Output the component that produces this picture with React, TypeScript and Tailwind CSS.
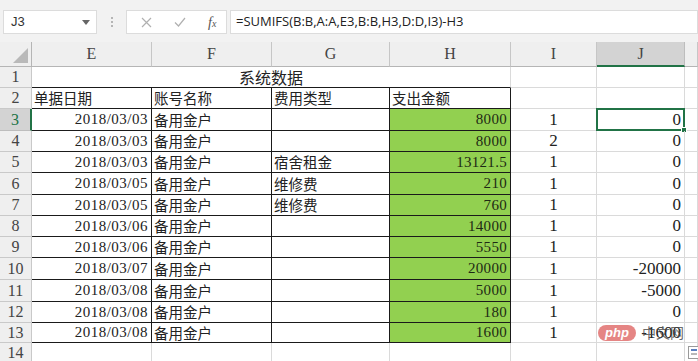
import { FC, ReactNode } from "react";

const serif = "font-['Liberation_Serif','Noto_Sans_CJK_SC',serif]";
const cjk = "font-['Noto_Sans_CJK_SC',sans-serif]";

const rows: string[][] = [
  ["2018/03/03", "备用金户", "", "8000", "1", "0"],
  ["2018/03/03", "备用金户", "", "8000", "2", "0"],
  ["2018/03/03", "备用金户", "宿舍租金", "13121.5", "1", "0"],
  ["2018/03/05", "备用金户", "维修费", "210", "1", "0"],
  ["2018/03/05", "备用金户", "维修费", "760", "1", "0"],
  ["2018/03/06", "备用金户", "", "14000", "1", "0"],
  ["2018/03/06", "备用金户", "", "5550", "1", "0"],
  ["2018/03/07", "备用金户", "", "20000", "1", "-20000"],
  ["2018/03/08", "备用金户", "", "5000", "1", "-5000"],
  ["2018/03/08", "备用金户", "", "180", "1", "0"],
  ["2018/03/08", "备用金户", "", "1600", "1", "-1600"],
];

// row heights measured off the sheet, rows 1..13
const heights = [
  "h-[21px]", "h-[21px]", "h-[22px]", "h-[21px]", "h-[21px]", "h-[22px]",
  "h-[21px]", "h-[21px]", "h-[21px]", "h-[22px]", "h-[22px]", "h-[21px]", "h-[20px]",
];

const grid = "border-r border-b border-[#dadada]";
const boxed = "border-r border-b border-[#1a1a1a]";

const RowHead: FC<{ n: number; active?: boolean }> = ({ n, active }) => (
  <div
    className={`w-[32px] shrink-0 flex items-center justify-center border-b border-r ${serif} text-[16px] ${
      active
        ? "bg-[#d3d3d3] border-b-[#bdbdbd] border-r-[#217346] border-r-2 text-[#217346]"
        : "bg-[#efefef] border-[#c9c9c9] text-[#444]"
    }`}
  >
    {n}
  </div>
);

const Cell: FC<{ w: string; cls?: string; children?: ReactNode }> = ({ w, cls = grid, children }) => (
  <div className={`${w} shrink-0 flex items-center overflow-visible whitespace-nowrap ${cls}`}>{children}</div>
);

const ColHead: FC<{ w: string; label: string; active?: boolean }> = ({ w, label, active }) => (
  <div
    className={`${w} shrink-0 flex items-center justify-center ${serif} text-[16px] text-[#444] border-r ${
      active
        ? "bg-[#d3d3d3] border-r-[#bdbdbd] border-b-2 border-b-[#217346]"
        : "bg-[#efefef] border-r-[#c6c6c6] border-b border-b-[#b5b5b5]"
    }`}
  >
    {label}
  </div>
);

export default function App() {
  return (
    <div className="w-[698px] h-[361px] overflow-hidden bg-white relative">
      {/* formula bar */}
      <div className="h-[42px] bg-[#f2f2f2] flex items-start pt-[10px] pl-[3px]">
        <div className="w-[94px] h-[24px] bg-white border border-[#dcdcdc] flex items-center justify-between pl-[7px] pr-[6px]">
          <span className="font-['Liberation_Sans',sans-serif] text-[13px] text-[#333]">J3</span>
          <svg width="8" height="5" viewBox="0 0 8 5">
            <path d="M0 0h8L4 5z" fill="#666" />
          </svg>
        </div>
        <div className="w-[29px] h-[24px] flex flex-col items-center justify-center gap-[2px]">
          <span className="w-[2px] h-[2px] bg-[#b5b5b5]" />
          <span className="w-[2px] h-[2px] bg-[#b5b5b5]" />
          <span className="w-[2px] h-[2px] bg-[#b5b5b5]" />
        </div>
        <div className="w-[101px] h-[24px] bg-white border border-[#dcdcdc] flex items-center pl-[14px] gap-[22px]">
          <svg width="11" height="11" viewBox="0 0 11 11">
            <path d="M1 1l9 9M10 1l-9 9" stroke="#b0b0b0" strokeWidth="1.2" />
          </svg>
          <svg width="12" height="10" viewBox="0 0 12 10">
            <path d="M1 5.5l3.5 3.5L11 1" stroke="#b0b0b0" strokeWidth="1.2" fill="none" />
          </svg>
          <span className={`${serif} italic text-[14px] text-[#555]`}>
            f<span className="text-[10px]">x</span>
          </span>
        </div>
        <div className="flex-1 h-[24px] bg-white border border-[#dcdcdc] ml-[3px] flex items-center pl-[5px]">
          <span className="font-['Open_Sans',sans-serif] text-[13px] text-[#222]">
            =SUMIFS(B:B,A:A,E3,B:B,H3,D:D,I3)-H3
          </span>
        </div>
      </div>

      {/* column headers */}
      <div className="flex h-[25px]">
        <div className="w-[32px] shrink-0 bg-[#efefef] border-r border-b border-[#b5b5b5] flex items-end justify-end pr-[3px] pb-[3px]">
          <svg width="15" height="15" viewBox="0 0 15 15">
            <path d="M15 0V15H0z" fill="#b9b9b9" />
          </svg>
        </div>
        <ColHead w="w-[120px]" label="E" />
        <ColHead w="w-[120px]" label="F" />
        <ColHead w="w-[118px]" label="G" />
        <ColHead w="w-[121px]" label="H" />
        <ColHead w="w-[86px]" label="I" />
        <ColHead w="w-[88px]" label="J" active />
        <ColHead w="w-[13px]" label="" />
      </div>

      {/* row 1: merged title */}
      <div className={`flex ${heights[0]}`}>
        <RowHead n={1} />
        <div className={`w-[479px] shrink-0 flex items-center justify-center border-b border-[#1a1a1a] border-r border-r-[#dadada] ${cjk} text-[16px] text-[#222]`}>
          系统数据
        </div>
        <Cell w="w-[86px]" />
        <Cell w="w-[88px]" />
        <Cell w="w-[13px]" />
      </div>

      {/* row 2: headers */}
      <div className={`flex ${heights[1]}`}>
        <RowHead n={2} />
        {["单据日期", "账号名称", "费用类型", "支出金额"].map((t, i) => (
          <Cell key={t} w={["w-[120px]", "w-[120px]", "w-[118px]", "w-[121px]"][i]} cls={`${boxed} pl-[2px] ${cjk} text-[14.5px] text-[#222]`}>
            {t}
          </Cell>
        ))}
        <Cell w="w-[86px]" />
        <Cell w="w-[88px]" />
        <Cell w="w-[13px]" />
      </div>

      {rows.map((r, i) => (
        <div key={i} className={`flex ${heights[i + 2]}`}>
          <RowHead n={i + 3} active={i === 0} />
          <Cell w="w-[120px]" cls={`${boxed} justify-end pr-[3px] ${serif} text-[15px] tracking-[0.5px] text-[#222]`}>
            {r[0]}
          </Cell>
          <Cell w="w-[120px]" cls={`${boxed} pl-[2px] ${cjk} text-[14.5px] text-[#222]`}>
            {r[1]}
          </Cell>
          <Cell w="w-[118px]" cls={`${boxed} pl-[2px] ${cjk} text-[14.5px] text-[#222]`}>
            {r[2]}
          </Cell>
          <Cell w="w-[121px]" cls={`${boxed} bg-[#92d050] justify-end pr-[3px] ${serif} text-[15px] tracking-[0.3px] text-[#1e2a14]`}>
            {r[3]}
          </Cell>
          <Cell w="w-[86px]" cls={`${grid} justify-center ${serif} text-[17px] text-[#222]`}>
            {r[4]}
          </Cell>
          <Cell w="w-[88px]" cls={`${grid} relative justify-end pr-[3px] ${serif} text-[17px] text-[#222]`}>
            {r[5]}
            {i === 0 && (
              <div className="absolute -left-[1px] -top-[1px] -right-[1px] -bottom-[1px] border-2 border-[#217346]">
                <div className="absolute -right-[4px] -bottom-[4px] w-[6px] h-[6px] bg-[#217346] border border-white" />
              </div>
            )}
          </Cell>
          <Cell w="w-[13px]" />
        </div>
      ))}

      {/* row 14 */}
      <div className="flex h-[20px]">
        <RowHead n={14} />
        <Cell w="w-[120px]" />
        <Cell w="w-[120px]" />
        <Cell w="w-[118px]" />
        <Cell w="w-[121px]" />
        <Cell w="w-[86px]" />
        <Cell w="w-[88px]" />
        <Cell w="w-[13px]" />
      </div>

      {/* quick analysis button */}
      <div className="absolute left-[688px] top-[346px] w-[12px] h-[13px] bg-white border border-[#9a9a9a] flex flex-col gap-[2px] p-[2px]">
        <span className="h-[2px] bg-[#5a7fc0]" />
        <span className="h-[2px] bg-[#b8b8b8]" />
      </div>

      {/* site watermark */}
      <div className="absolute left-[598px] top-[322px] flex items-center gap-[6px]">
        <div className="w-[38px] h-[16px] rounded-full bg-[#e0706f]/85 flex items-center justify-center">
          <span className="font-['Liberation_Sans',sans-serif] italic font-bold text-[13px] leading-none text-white">php</span>
        </div>
        <span className={`${cjk} text-[14px] text-[#444]/80`}>中文网</span>
      </div>
    </div>
  );
}
